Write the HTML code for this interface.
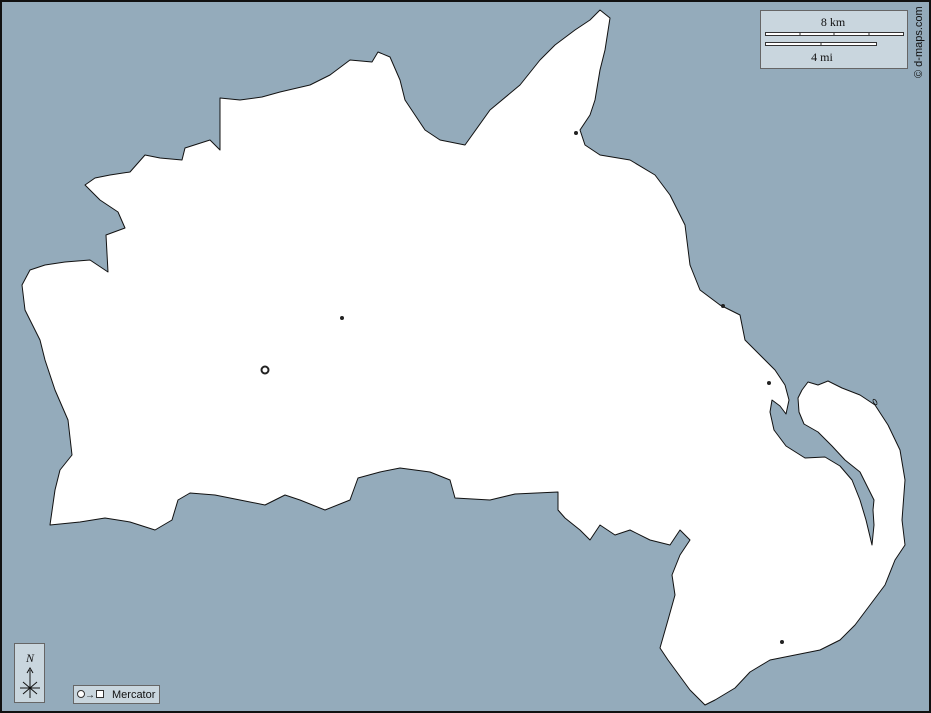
<!DOCTYPE html>
<html><head><style>
html,body{margin:0;padding:0;}
body{width:931px;height:713px;overflow:hidden;background:#94abbb;font-family:"Liberation Serif",serif;}
</style></head><body>
<svg width="931" height="713" viewBox="0 0 931 713" xmlns="http://www.w3.org/2000/svg" style="position:absolute;left:0;top:0">
<rect x="0" y="0" width="931" height="713" fill="#94abbb"/>
<polygon fill="#fff" stroke="#111" stroke-width="1" stroke-linejoin="round" points="22,285 30,270 45,265 65,262 90,260 108,272 106,235 125,228 118,212 100,200 85,185 95,178 110,175 130,172 145,155 160,158 182,160 185,148 210,140 220,150 220,98 240,100 262,97 280,92 310,85 330,75 350,60 372,62 378,52 390,57 400,80 405,100 415,115 425,130 440,140 465,145 490,110 520,85 540,60 555,45 575,30 590,20 600,10 610,18 605,50 600,70 595,100 590,115 580,130 585,145 600,155 630,160 655,175 670,195 685,225 690,265 700,290 720,305 740,315 745,340 760,355 775,370 785,385 789,400 786,414 780,406 772,400 770,412 774,430 786,446 805,458 825,457 840,466 852,480 860,500 866,520 872,545 874,525 873,510 874,500 868,488 860,472 845,460 832,446 818,432 804,424 799,412 798,398 802,390 808,382 818,385 828,381 842,388 860,395 875,405 888,425 900,450 905,480 902,520 905,545 895,560 885,585 870,605 855,625 840,640 820,650 795,655 770,660 750,672 735,688 715,700 705,705 690,690 668,660 660,648 668,620 675,595 672,575 680,555 690,540 680,530 670,545 650,540 630,530 615,535 600,525 590,540 580,530 565,518 558,510 558,492 515,494 490,500 455,498 450,480 430,472 400,468 380,472 358,478 350,500 325,510 300,500 285,495 265,505 240,500 215,495 190,493 178,500 172,520 155,530 130,522 105,518 80,522 50,525 55,490 60,470 72,455 68,420 55,390 45,360 40,340 25,310"/>
<ellipse cx="875" cy="402" rx="1.5" ry="3" transform="rotate(-30 875 402)" fill="#94abbb" stroke="#111" stroke-width="0.8"/>
<g fill="#222">
<circle cx="576" cy="133" r="2"/><circle cx="342" cy="318" r="2"/><circle cx="723" cy="306" r="2"/><circle cx="769" cy="383" r="2"/><circle cx="782" cy="642" r="2"/>
</g>
<circle cx="265" cy="370" r="3.5" fill="#fff" stroke="#222" stroke-width="2"/>
<rect x="760.5" y="10.5" width="147" height="58" fill="#c9d6de" stroke="#666"/>
<text x="833" y="26" font-size="12" text-anchor="middle" fill="#111">8 km</text>
<rect x="765.5" y="32.5" width="138" height="3" fill="#fff" stroke="#333" stroke-width="1"/>
<line x1="800" y1="32" x2="800" y2="36" stroke="#333"/><line x1="834" y1="32" x2="834" y2="36" stroke="#333"/><line x1="869" y1="32" x2="869" y2="36" stroke="#333"/>
<rect x="765.5" y="42.5" width="111" height="3" fill="#fff" stroke="#333" stroke-width="1"/>
<line x1="821" y1="42" x2="821" y2="46" stroke="#333"/>
<text x="822" y="61" font-size="12" text-anchor="middle" fill="#111">4 mi</text>
<text transform="translate(922,78) rotate(-90)" font-size="11" font-family="Liberation Sans,sans-serif" fill="#111">© d-maps.com</text>
<rect x="14.5" y="643.5" width="30" height="59" fill="#c9d6de" stroke="#666"/>
<text x="30" y="662" font-size="12" font-style="italic" text-anchor="middle" fill="#111">N</text>
<line x1="30" y1="670" x2="30" y2="698" stroke="#111"/>
<path d="M27,673 L30,668 L33,673" fill="none" stroke="#111"/>
<line x1="20" y1="688" x2="40" y2="688" stroke="#111"/>
<line x1="23" y1="682" x2="37" y2="694" stroke="#111"/><line x1="37" y1="682" x2="23" y2="694" stroke="#111"/>
<rect x="73.5" y="685.5" width="86" height="18" fill="#c9d6de" stroke="#666"/>
<circle cx="81" cy="694" r="3.5" fill="#fff" stroke="#333"/>
<text x="85" y="698" font-size="10" font-family="Liberation Sans,sans-serif" fill="#111">→</text>
<rect x="96.5" y="690.5" width="7" height="7" fill="#fff" stroke="#333"/>
<text x="112" y="698" font-size="11" font-family="Liberation Sans,sans-serif" fill="#111">Mercator</text>
<rect x="1" y="1" width="929" height="711" fill="none" stroke="#111" stroke-width="2"/>
</svg>
</body></html>
